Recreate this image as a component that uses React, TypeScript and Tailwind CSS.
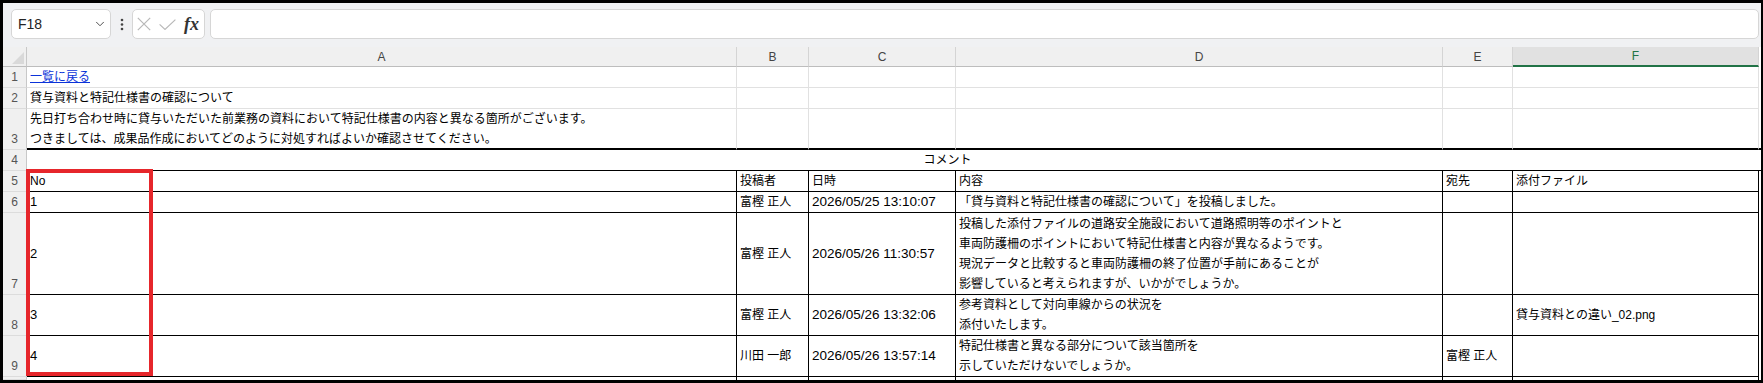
import { ChevronDown } from "lucide-react"
import type { ReactNode } from "react"

const FONT = "font-['Liberation_Sans','Noto_Sans_CJK_JP',sans-serif]"

const GRID = "border-r border-b border-[#e1e1e1]"
const TABLE = "border-r border-b border-black"

function Cell({ className = "", children }: { className?: string; children?: ReactNode }) {
  return (
    <div className={`flex min-w-0 items-center whitespace-nowrap px-[3px] text-[12px] leading-[20px] text-black ${className}`}>
      {children}
    </div>
  )
}

function RowHead({ n, className = "" }: { n?: number; className?: string }) {
  return (
    <div
      className={`flex items-end justify-center border-r border-b border-r-[#c8c8c8] border-b-[#dcdcdc] bg-[#f0f0f0] text-[12px] leading-[20px] text-[#555] ${className}`}
    >
      {n}
    </div>
  )
}

function ColHead({ label, active = false }: { label: string; active?: boolean }) {
  return (
    <div
      className={
        active
          ? "flex items-center justify-center border-r border-b-2 border-r-[#d4d4d4] border-b-[#217346] bg-[#e1e1e1] text-[12px] text-[#217346]"
          : "flex items-center justify-center border-r border-b border-r-[#d4d4d4] border-b-[#bdbdbd] bg-[#f0f0f0] text-[12px] text-[#444]"
      }
    >
      {label}
    </div>
  )
}

function Lines({ lines }: { lines: string[] }) {
  return (
    <div className="flex flex-col">
      {lines.map((l) => (
        <span key={l}>{l}</span>
      ))}
    </div>
  )
}

const comments = [
  {
    no: "1",
    author: "富樫 正人",
    date: "2026/05/25 13:10:07",
    body: ["「貸与資料と特記仕様書の確認について」を投稿しました。"],
    to: "",
    file: "",
  },
  {
    no: "2",
    author: "富樫 正人",
    date: "2026/05/26 11:30:57",
    body: [
      "投稿した添付ファイルの道路安全施設において道路照明等のポイントと",
      "車両防護柵のポイントにおいて特記仕様書と内容が異なるようです。",
      "現況データと比較すると車両防護柵の終了位置が手前にあることが",
      "影響していると考えられますが、いかがでしょうか。",
    ],
    to: "",
    file: "",
  },
  {
    no: "3",
    author: "富樫 正人",
    date: "2026/05/26 13:32:06",
    body: ["参考資料として対向車線からの状況を", "添付いたします。"],
    to: "",
    file: "貸与資料との違い_02.png",
  },
  {
    no: "4",
    author: "川田 一郎",
    date: "2026/05/26 13:57:14",
    body: ["特記仕様書と異なる部分について該当箇所を", "示していただけないでしょうか。"],
    to: "富樫 正人",
    file: "",
  },
]

export default function App() {
  return (
    <div
      className={`${FONT} box-border flex h-[383px] w-[1763px] flex-col overflow-hidden border-t-[3px] border-r-2 border-b-[3px] border-l-[3px] border-black bg-white`}
    >
      {/* formula bar */}
      <div className="flex h-[44px] shrink-0 items-start bg-[#f0f1f3] pt-[6px]">
        <div className="ml-[8px] flex h-[30px] w-[100px] items-center justify-between rounded-[5px] border border-[#d6d6d6] bg-white pr-[3px] pl-[6px]">
          <span className="text-[14px] text-[#242424]">F18</span>
          <ChevronDown size={14} strokeWidth={1.6} className="text-[#444]" />
        </div>
        <svg width="4" height="30" viewBox="0 0 4 30" className="ml-[9px]">
          <circle cx="2" cy="11" r="1.3" fill="#444" />
          <circle cx="2" cy="15.5" r="1.3" fill="#444" />
          <circle cx="2" cy="20" r="1.3" fill="#444" />
        </svg>
        <div className="ml-[8px] flex h-[30px] w-[73px] items-center rounded-[5px] border border-[#d6d6d6] bg-white pl-[4px]">
          <svg width="14" height="14" viewBox="0 0 14 14">
            <path d="M0.8 0.8 13.2 13.2M13.2 0.8 0.8 13.2" stroke="#b8b8b8" strokeWidth="1.2" fill="none" />
          </svg>
          <svg width="17" height="11" viewBox="0 0 17 11" className="ml-[8px]">
            <path d="M0.6 5.4 6 10.4 16.4 0.6" stroke="#b8b8b8" strokeWidth="1.2" fill="none" />
          </svg>
          <span className="ml-[8px] font-['Liberation_Serif',serif] text-[18px] leading-none font-semibold italic text-[#333]">
            fx
          </span>
        </div>
        <div className="mr-[2px] ml-[5px] h-[30px] flex-1 rounded-[5px] border border-[#d6d6d6] bg-white" />
      </div>

      {/* sheet */}
      <div className="relative grid grid-cols-[24px_710px_72px_147px_487px_70px_246px_2px] grid-rows-[20px_21px_21px_41px_21px_21px_21px_82px_41px_41px_3px]">
        {/* column headers */}
        <div className="flex items-end justify-end border-r border-b border-r-[#c8c8c8] border-b-[#bdbdbd] bg-[#f0f0f0] p-[2px]">
          <svg width="12" height="12" viewBox="0 0 12 12">
            <polygon points="12,0 12,12 0,12" fill="#d9d9d9" />
          </svg>
        </div>
        <ColHead label="A" />
        <ColHead label="B" />
        <ColHead label="C" />
        <ColHead label="D" />
        <ColHead label="E" />
        <ColHead label="F" active />
        <div />

        {/* row 1 */}
        <RowHead n={1} />
        <Cell className={GRID}>
          <span className="text-[#0b33d9] underline">一覧に戻る</span>
        </Cell>
        <Cell className={GRID} />
        <Cell className={GRID} />
        <Cell className={GRID} />
        <Cell className={GRID} />
        <Cell className={GRID} />
        <div />

        {/* row 2 */}
        <RowHead n={2} />
        <Cell className={GRID}>貸与資料と特記仕様書の確認について</Cell>
        <Cell className={GRID} />
        <Cell className={GRID} />
        <Cell className={GRID} />
        <Cell className={GRID} />
        <Cell className={GRID} />
        <div />

        {/* row 3 */}
        <RowHead n={3} />
        <Cell className="border-r border-b-2 border-r-[#e1e1e1] border-b-black">
          <Lines
            lines={[
              "先日打ち合わせ時に貸与いただいた前業務の資料において特記仕様書の内容と異なる箇所がございます。",
              "つきましては、成果品作成においてどのように対処すればよいか確認させてください。",
            ]}
          />
        </Cell>
        <Cell className="border-r border-b-2 border-r-[#e1e1e1] border-b-black" />
        <Cell className="border-r border-b-2 border-r-[#e1e1e1] border-b-black" />
        <Cell className="border-r border-b-2 border-r-[#e1e1e1] border-b-black" />
        <Cell className="border-r border-b-2 border-r-[#e1e1e1] border-b-black" />
        <Cell className="border-r border-b-2 border-r-[#e1e1e1] border-b-black" />
        <div className="border-b-2 border-black" />

        {/* row 4 */}
        <RowHead n={4} />
        <Cell className="col-span-6 justify-center border-b border-black pl-[112px]">コメント</Cell>
        <div className="border-b border-black" />

        {/* row 5 */}
        <RowHead n={5} />
        <Cell className={TABLE}>No</Cell>
        <Cell className={TABLE}>投稿者</Cell>
        <Cell className={TABLE}>日時</Cell>
        <Cell className={TABLE}>内容</Cell>
        <Cell className={TABLE}>宛先</Cell>
        <Cell className={TABLE}>添付ファイル</Cell>
        <div />

        {comments.map((c, i) => (
          <div key={c.no} className="contents">
            <RowHead n={6 + i} />
            <Cell className={`${TABLE} text-[13px]`}>{c.no}</Cell>
            <Cell className={TABLE}>{c.author}</Cell>
            <Cell className={`${TABLE} text-[13.5px]`}>{c.date}</Cell>
            <Cell className={TABLE}>
              <Lines lines={c.body} />
            </Cell>
            <Cell className={TABLE}>{c.to}</Cell>
            <Cell className={TABLE}>{c.file}</Cell>
            <div />
          </div>
        ))}

        {/* row 10, cut off */}
        <RowHead />
        <div className="border-r border-black" />
        <div className="border-r border-black" />
        <div className="border-r border-black" />
        <div className="border-r border-black" />
        <div className="border-r border-black" />
        <div className="border-r border-black" />
        <div />

        {/* selection highlight */}
        <div className="absolute top-[122px] left-[23px] h-[207px] w-[127px] border-4 border-[#e6262b]" />
      </div>
    </div>
  )
}
